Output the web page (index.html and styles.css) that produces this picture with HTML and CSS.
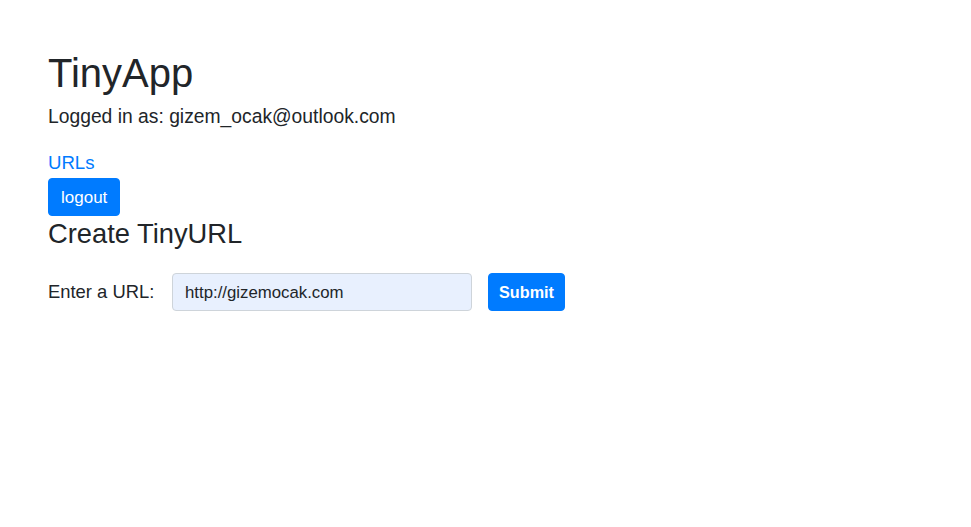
FILE: index.html
```html
<!DOCTYPE html>
<html lang="en">
<head>
<meta charset="utf-8">
<title>TinyApp</title>
<link rel="stylesheet" href="styles.css">
</head>
<body>
<main class="page">
  <header class="header">
    <h1 class="brand">TinyApp</h1>
    <p class="logged">Logged in as: gizem_ocak@outlook.com</p>
    <a class="nav-link" href="#">URLs</a>
    <form class="logout-form">
      <button type="button" class="btn">logout</button>
    </form>
  </header>
  <h2 class="title">Create TinyURL</h2>
  <form class="url-form">
    <label class="url-label" for="longURL">Enter a URL:</label>
    <input class="url-input" id="longURL" type="text" value="http://gizemocak.com">
    <button type="button" class="btn btn-submit">Submit</button>
  </form>
</main>
</body>
</html>
```

FILE: styles.css
```css
html, body {
  margin: 0;
  padding: 0;
  background: #fff;
}
body {
  font-family: "Liberation Sans", Arial, sans-serif;
  color: #212529;
  font-size: 16px;
}
.page {
  padding: 49px 48px 0;
}
.header {
  display: flex;
  flex-direction: column;
  align-items: flex-start;
}
.brand {
  margin: 0;
  font-size: 40px;
  font-weight: 500;
  line-height: 48px;
}
.logged {
  margin: 8px 0 0;
  font-size: 19.3px;
  line-height: 24px;
}
.nav-link {
  margin-top: 22px;
  color: #007bff;
  text-decoration: none;
  font-size: 18.6px;
  line-height: 24px;
}
.logout-form {
  margin: 3px 0 0;
}
.btn {
  display: inline-block;
  height: 38px;
  padding: 1px 12px 0;
  border: 1px solid #007bff;
  border-radius: 4px;
  background: #007bff;
  color: #fff;
  font-family: inherit;
  font-size: 17px;
  line-height: 35px;
  cursor: pointer;
}
.logout-form .btn {
  width: 72px;
}
.title {
  margin: 0;
  font-size: 27.3px;
  font-weight: 500;
  line-height: 36px;
}
.url-form {
  display: flex;
  align-items: center;
  margin-top: 21px;
}
.url-label {
  font-size: 18.4px;
  margin-right: 16px;
  width: 108px;
}
.url-input {
  box-sizing: border-box;
  width: 300px;
  height: 38px;
  padding: 1px 12px 0;
  border: 1px solid #ced4da;
  border-radius: 4px;
  background: #e8f0fe;
  color: #212529;
  font-family: inherit;
  font-size: 16.8px;
}
.btn-submit {
  margin-left: 16px;
  width: 77px;
  padding: 1px 0 0;
  font-size: 16.2px;
  font-weight: bold;
}
```
